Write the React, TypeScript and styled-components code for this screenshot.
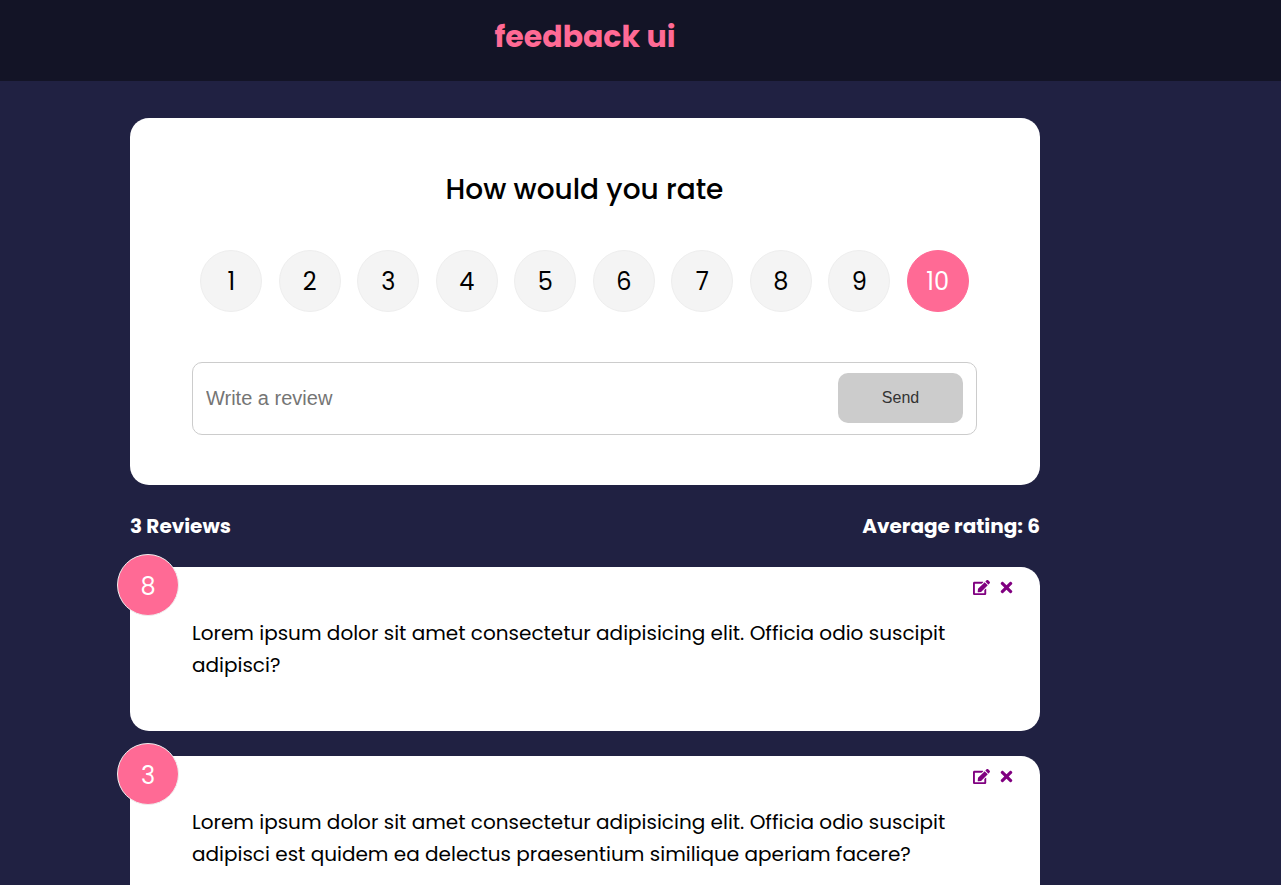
import { useState } from 'react';
import styled, { createGlobalStyle } from 'styled-components';
import { FaEdit, FaTimes } from 'react-icons/fa';

const GlobalStyle = createGlobalStyle`
  *, *::before, *::after { box-sizing: border-box; }
  body {
    margin: 0;
    background: #202142;
    color: #000;
    font-family: Poppins, Inter, sans-serif;
    font-size: 20px;
    font-weight: 400;
    line-height: 32px;
  }
`;

const Header = styled.header`
  background: #131426;
  padding: 17px 0 24px;
`;

const Band = styled.div`
  max-width: 1170px;
  padding: 0 13px;
`;

const Container = styled.div`
  max-width: 910px;
  margin: 0 auto;
`;

const Brand = styled.h1`
  margin: 0;
  color: #ff6a95;
  font-size: 30px;
  font-weight: 700;
  line-height: 40px;
  text-align: center;
`;

const Main = styled.main`
  padding-top: 37px;
`;

const Card = styled.section`
  position: relative;
  padding: 50px 63px 50px 62px;
  border-radius: 19px;
  background: #fff;
`;

const Title = styled.h2`
  margin: 0 0 38px;
  font-size: 28px;
  font-weight: 500;
  line-height: 44px;
  text-align: center;
`;

const Ratings = styled.ul`
  display: flex;
  justify-content: space-around;
  margin: 0 0 50px;
  padding: 0;
  list-style: none;
`;

const HiddenRadio = styled.input`
  position: absolute;
  opacity: 0;
`;

const RatingLabel = styled.label<{ $selected: boolean }>`
  display: grid;
  place-items: center;
  width: 62px;
  height: 62px;
  padding-top: 2px;
  border: 1px solid ${(p) => (p.$selected ? '#ff6a95' : '#eee')};
  border-radius: 50%;
  background: ${(p) => (p.$selected ? '#ff6a95' : '#f4f4f4')};
  color: ${(p) => (p.$selected ? '#fff' : '#000')};
  font-size: 24px;
  cursor: pointer;
`;

const InputGroup = styled.div`
  display: flex;
  align-items: flex-start;
  padding: 10px 13px;
  border: 1px solid #ccc;
  border-radius: 10px;
`;

const ReviewInput = styled.input`
  flex: 1;
  min-width: 0;
  height: 51px;
  padding: 0;
  border: 0;
  outline: 0;
  background: transparent;
  font-family: 'Liberation Sans', Arial, sans-serif;
  font-size: 20px;

  &::placeholder { color: #757575; }
`;

const SendButton = styled.button`
  width: 125px;
  height: 50px;
  border: 0;
  border-radius: 10px;
  background: #ccc;
  color: #333;
  font-family: 'Liberation Sans', Arial, sans-serif;
  font-size: 16px;
`;

const Stats = styled.div`
  display: flex;
  justify-content: space-between;
  align-items: center;
  height: 82px;
  color: #fff;
`;

const Stat = styled.h4`
  margin: 0;
  font-size: 20px;
  font-weight: 700;
`;

const ReviewList = styled.div`
  display: grid;
  gap: 25px;
`;

const Badge = styled.div`
  position: absolute;
  top: -13px;
  left: -13px;
  display: grid;
  place-items: center;
  width: 62px;
  height: 62px;
  padding-top: 4px;
  border: 1px solid #eee;
  border-radius: 50%;
  background: #ff6a95;
  color: #fff;
  font-size: 24px;
`;

const Actions = styled.div`
  position: absolute;
  top: 12px;
  right: 25px;
  display: flex;
  gap: 8px;
`;

const IconButton = styled.button`
  display: flex;
  padding: 0;
  border: 0;
  background: none;
  color: purple;
  font-size: 17px;
  cursor: pointer;
`;

const ReviewText = styled.p`
  margin: 0;
`;

const scores = [1, 2, 3, 4, 5, 6, 7, 8, 9, 10];

const reviews = [
  {
    id: 1,
    rating: 8,
    text: 'Lorem ipsum dolor sit amet consectetur adipisicing elit. Officia odio suscipit adipisci?',
  },
  {
    id: 2,
    rating: 3,
    text: 'Lorem ipsum dolor sit amet consectetur adipisicing elit. Officia odio suscipit adipisci est quidem ea delectus praesentium similique aperiam facere?',
  },
];

export default function App() {
  const [rating, setRating] = useState(10);
  const [text, setText] = useState('');

  return (
    <>
      <GlobalStyle />
      <Header>
        <Band>
          <Brand>feedback ui</Brand>
        </Band>
      </Header>
      <Main>
        <Band>
          <Container>
            <Card as="form" onSubmit={(e: React.FormEvent) => e.preventDefault()}>
              <Title>How would you rate</Title>
              <Ratings>
                {scores.map((n) => (
                  <li key={n}>
                    <HiddenRadio
                      type="radio"
                      id={`score-${n}`}
                      name="rating"
                      value={n}
                      checked={rating === n}
                      onChange={() => setRating(n)}
                    />
                    <RatingLabel htmlFor={`score-${n}`} $selected={rating === n}>
                      {n}
                    </RatingLabel>
                  </li>
                ))}
              </Ratings>
              <InputGroup>
                <ReviewInput
                  type="text"
                  aria-label="Write a review"
                  placeholder="Write a review"
                  value={text}
                  onChange={(e) => setText(e.target.value)}
                />
                <SendButton type="submit" disabled={text.trim() === ''}>
                  Send
                </SendButton>
              </InputGroup>
            </Card>
            <Stats>
              <Stat>3 Reviews</Stat>
              <Stat>Average rating: 6</Stat>
            </Stats>
            <ReviewList>
              {reviews.map((r) => (
                <Card key={r.id} as="article">
                  <Badge>{r.rating}</Badge>
                  <Actions>
                    <IconButton type="button" aria-label="Edit review">
                      <FaEdit />
                    </IconButton>
                    <IconButton type="button" aria-label="Delete review">
                      <FaTimes />
                    </IconButton>
                  </Actions>
                  <ReviewText>{r.text}</ReviewText>
                </Card>
              ))}
            </ReviewList>
          </Container>
        </Band>
      </Main>
    </>
  );
}
